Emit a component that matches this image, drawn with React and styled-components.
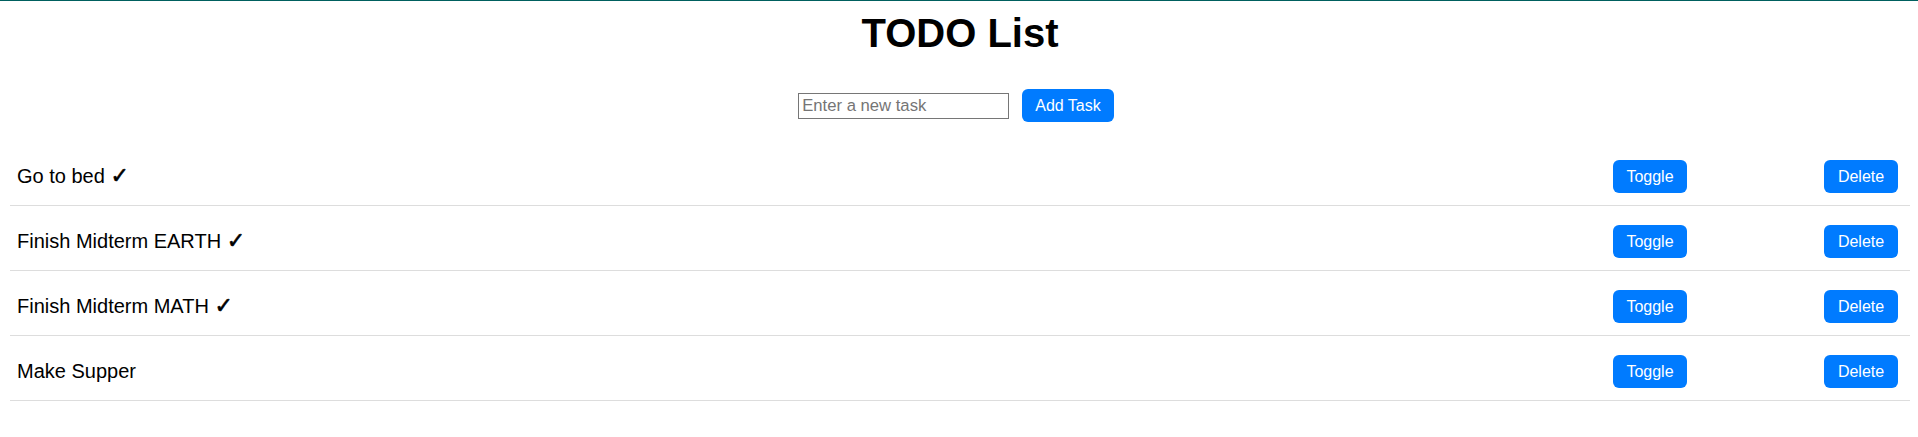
import React, { useState } from "react";
import styled, { createGlobalStyle } from "styled-components";

const GlobalStyle = createGlobalStyle`
  html, body {
    margin: 0;
    padding: 0;
    background: #ffffff;
    font-family: "Liberation Sans", Arial, sans-serif;
    color: #000000;
  }
`;

const Page = styled.div`
  border-top: 1px solid #00605f;
  padding: 0 8px 0 10px;
`;

const Title = styled.h1`
  margin: 9px 0 0;
  text-align: center;
  font-size: 40px;
  font-weight: bold;
  line-height: 46px;
`;

const Form = styled.form`
  display: flex;
  justify-content: center;
  align-items: center;
  gap: 13px;
  margin-top: 33px;
  padding-right: 8px;
`;

const TaskInput = styled.input`
  box-sizing: border-box;
  width: 211px;
  height: 26px;
  padding: 2px 3px;
  border: 1px solid #767676;
  border-radius: 0;
  font-family: "Liberation Sans", Arial, sans-serif;
  font-size: 16.67px;
  color: #000;
  outline: none;
  &::placeholder {
    color: #757575;
  }
`;

const Button = styled.button`
  box-sizing: border-box;
  height: 33px;
  min-width: 74px;
  padding: 0 13px;
  border: none;
  border-radius: 6px;
  background: #007bff;
  color: #ffffff;
  font-family: "Liberation Sans", Arial, sans-serif;
  font-size: 16px;
  cursor: pointer;
`;

const List = styled.ul`
  list-style: none;
  margin: 26px 0 0;
  padding: 0;
`;

const Row = styled.li`
  display: grid;
  grid-template-columns: 1fr 74px 74px;
  column-gap: 137px;
  align-items: center;
  margin-top: 7px;
  padding: 12px 12px 12px 7px;
  border-bottom: 1px solid #dddddd;
`;

const TaskText = styled.span`
  font-size: 20px;
  line-height: 23px;
`;

const Check = styled.span`
  font-family: "DejaVu Sans", sans-serif;
  font-size: 22px;
  line-height: 20px;
  -webkit-text-stroke: 0.6px currentColor;
`;

const initial = [
  { id: 1, text: "Go to bed", done: true },
  { id: 2, text: "Finish Midterm EARTH", done: true },
  { id: 3, text: "Finish Midterm MATH", done: true },
  { id: 4, text: "Make Supper", done: false },
];

export default function App() {
  const [tasks, setTasks] = useState(initial);
  const [value, setValue] = useState("");

  const add = (e) => {
    e.preventDefault();
    if (!value.trim()) return;
    setTasks([...tasks, { id: Date.now(), text: value.trim(), done: false }]);
    setValue("");
  };

  return (
    <Page>
      <GlobalStyle />
      <Title>TODO List</Title>
      <Form onSubmit={add}>
        <TaskInput
          placeholder="Enter a new task"
          value={value}
          onChange={(e) => setValue(e.target.value)}
        />
        <Button type="submit">Add Task</Button>
      </Form>
      <List>
        {tasks.map((t) => (
          <Row key={t.id}>
            <TaskText>
              {t.text}
              {t.done ? " " : ""}
              {t.done && <Check>✓</Check>}
            </TaskText>
            <Button
              onClick={() =>
                setTasks(tasks.map((x) => (x.id === t.id ? { ...x, done: !x.done } : x)))
              }
            >
              Toggle
            </Button>
            <Button onClick={() => setTasks(tasks.filter((x) => x.id !== t.id))}>
              Delete
            </Button>
          </Row>
        ))}
      </List>
    </Page>
  );
}
